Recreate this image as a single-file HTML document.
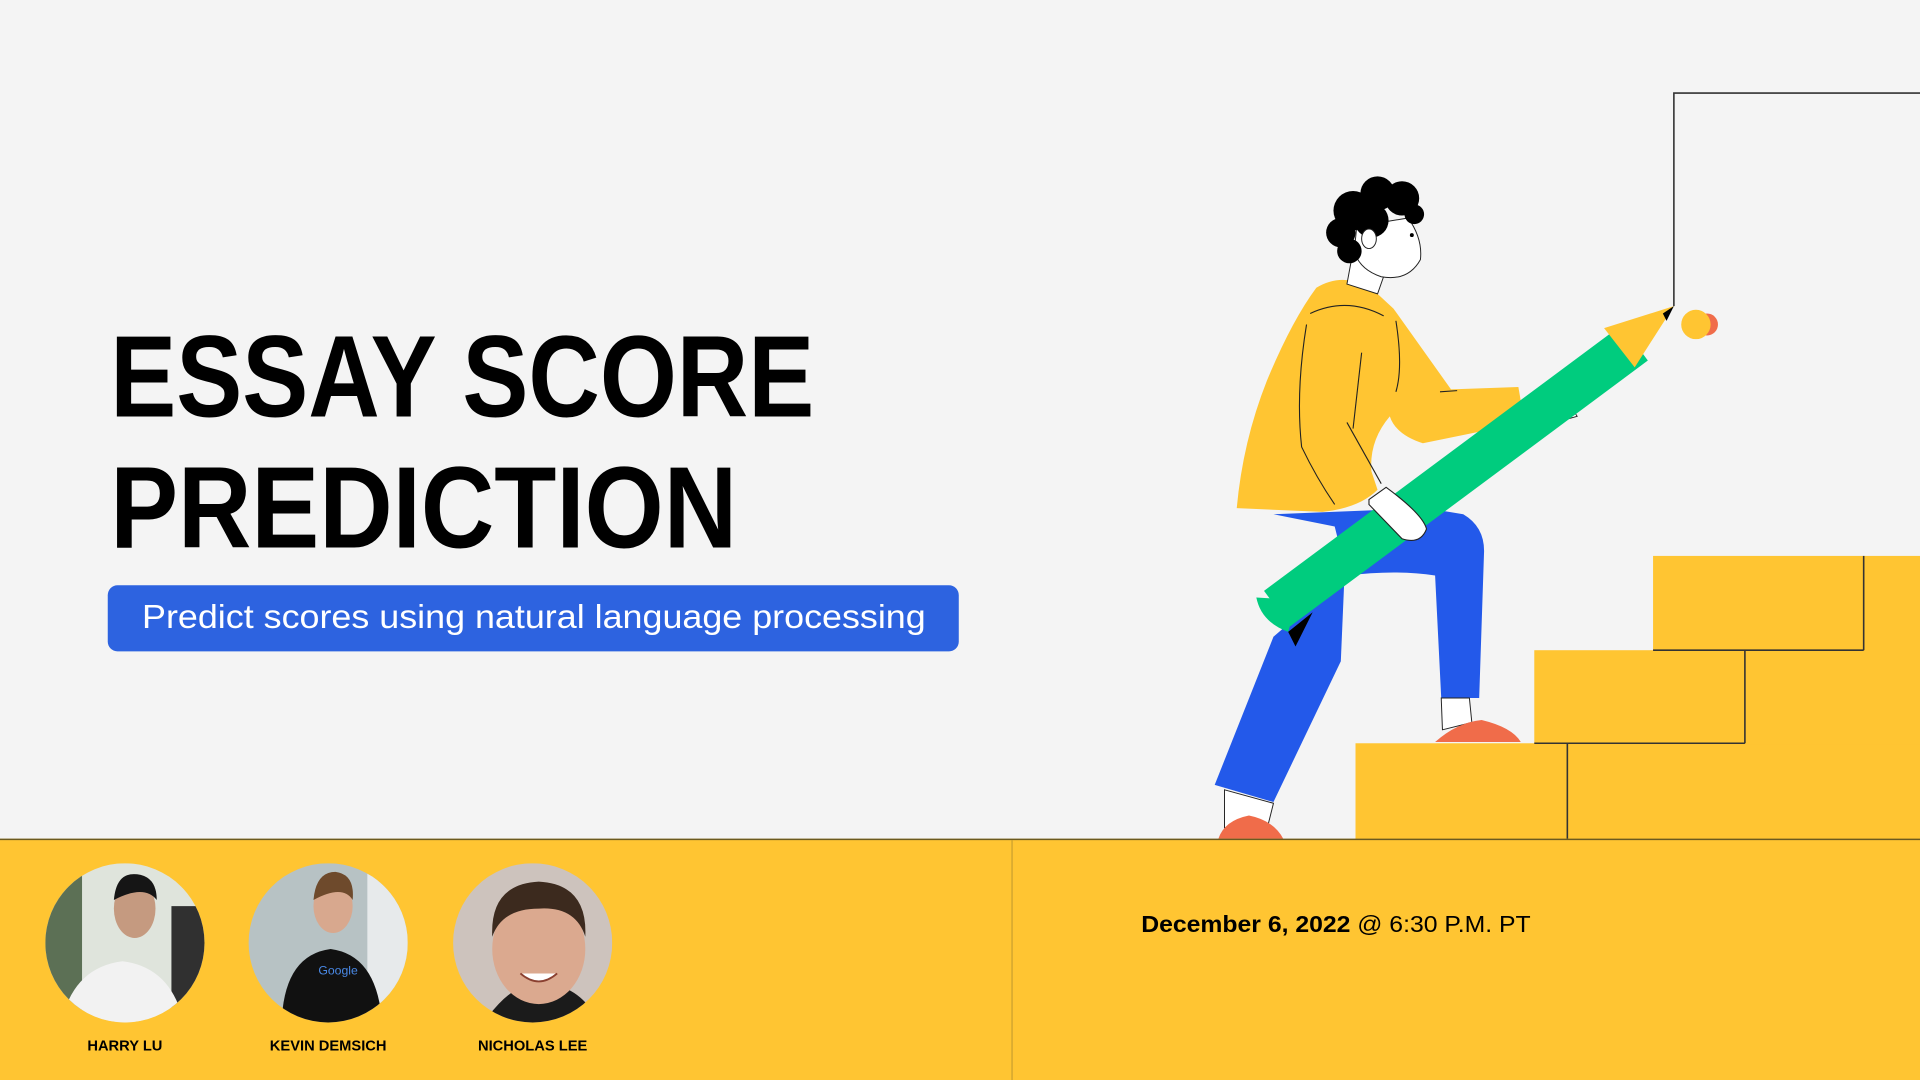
<!DOCTYPE html>
<html><head><meta charset="utf-8"><style>
html,body{margin:0;padding:0;width:1920px;height:1080px;overflow:hidden;background:#f4f4f4}
svg{display:block}
</style></head><body>
<svg width="1920" height="1080" viewBox="0 0 1568 882" xmlns="http://www.w3.org/2000/svg">
<defs>
<clipPath id="c1"><circle cx="102" cy="770" r="65"/></clipPath>
<clipPath id="c2"><circle cx="268" cy="770" r="65"/></clipPath>
<clipPath id="c3"><circle cx="435" cy="770" r="65"/></clipPath>
</defs>
<rect width="1568" height="882" fill="#f4f4f4"/>
<!-- title -->
<g font-family="Liberation Sans, sans-serif" font-weight="bold" fill="#000">
<text x="90" y="340" font-size="95" textLength="575" lengthAdjust="spacingAndGlyphs">ESSAY SCORE</text>
<text x="90" y="447" font-size="95" textLength="512" lengthAdjust="spacingAndGlyphs">PREDICTION</text>
</g>
<rect x="88" y="478" width="695" height="54" rx="8" fill="#2d63e0"/>
<text x="116" y="513" font-family="Liberation Sans, sans-serif" font-size="27" fill="#fff" textLength="640" lengthAdjust="spacingAndGlyphs">Predict scores using natural language processing</text>

<!-- frame line -->
<polyline points="1367,250 1367,76 1568,76" fill="none" stroke="#333" stroke-width="1.3"/>

<!-- stairs -->
<g fill="#ffc532">
<rect x="1107" y="607" width="461" height="79"/>
<rect x="1253" y="531" width="315" height="77"/>
<rect x="1350" y="454" width="218" height="78"/>
</g>
<g stroke="#333" stroke-width="1.3" fill="none">
<line x1="1280" y1="607" x2="1280" y2="685"/>
<line x1="1253" y1="607" x2="1425" y2="607"/>
<line x1="1425" y1="531" x2="1425" y2="607"/>
<line x1="1350" y1="531" x2="1522" y2="531"/>
<line x1="1522" y1="454" x2="1522" y2="531"/>
</g>

<!-- person -->
<!-- back leg -->
<path d="M1040,520 L1098,470 L1095,540 L1040,655 L992,641 Z" fill="#2359ea"/>
<path d="M1000,645 L1040,656 L1035,676 L1000,676 Z" fill="#fff" stroke="#222" stroke-width="0.8"/>
<path d="M995,685 Q1000,670 1020,666 Q1040,670 1048,685 Z" fill="#f06c4a"/>
<!-- front leg -->
<path d="M1040,420 L1165,415 L1195,420 Q1212,430 1212,450 L1208,570 L1177,570 L1172,470 Q1140,465 1100,470 L1090,430 Z" fill="#2359ea"/>
<path d="M1177,570 L1200,570 L1202,590 L1178,596 Z" fill="#fff" stroke="#222" stroke-width="0.8"/>
<path d="M1172,606 Q1190,590 1210,588 Q1235,594 1242,606 Z" fill="#f06c4a"/>
<!-- hoodie -->
<path d="M1075,235 Q1100,220 1125,240 L1138,252 L1185,318 L1240,316 L1245,345 L1162,362 Q1140,355 1135,340 Q1118,360 1120,385 L1125,400 Q1110,415 1080,418 L1010,415 Q1015,360 1035,310 Q1055,262 1075,235 Z" fill="#ffc532"/>
<g stroke="#222" stroke-width="0.9" fill="none">
<path d="M1070,256 Q1100,242 1130,258"/>
<path d="M1067,265 Q1058,320 1063,365 Q1075,390 1090,412"/>
<path d="M1112,288 L1105,350"/>
<path d="M1100,345 L1128,395"/>
<path d="M1140,262 Q1146,300 1140,320"/>
<path d="M1176,320 L1190,319"/>
</g>
<!-- neck/head -->
<path d="M1105,205 L1100,232 L1125,240 L1132,220 Z" fill="#fff" stroke="#222" stroke-width="0.8"/>
<path d="M1108,185 L1150,178 Q1162,195 1160,212 Q1150,230 1128,226 Q1110,220 1106,205 Z" fill="#fff" stroke="#222" stroke-width="0.8"/>
<g fill="#000">
<circle cx="1105" cy="172" r="16"/><circle cx="1125" cy="158" r="14"/><circle cx="1145" cy="162" r="14"/>
<circle cx="1095" cy="190" r="12"/><circle cx="1102" cy="205" r="10"/><circle cx="1120" cy="180" r="14"/>
<circle cx="1155" cy="175" r="8"/>
</g>
<ellipse cx="1118" cy="195" rx="6" ry="8" fill="#fff" stroke="#222" stroke-width="0.8"/>
<circle cx="1153" cy="192" r="1.6" fill="#000"/>
<!-- hand top -->
<path d="M1255,320 Q1280,325 1288,340 L1270,345 Z" fill="#fff" stroke="#222" stroke-width="0.8"/>
<!-- pencil -->
<line x1="1043" y1="497" x2="1335" y2="280" stroke="#00cc7e" stroke-width="36"/>
<path d="M1026,488 Q1030,508 1052,516 L1060,490 Z" fill="#00cc7e"/>
<path d="M1310,268 L1367,250 L1335,300 Z" fill="#ffc532"/>
<path d="M1358,256 L1367,250 L1361,262 Z" fill="#000"/>
<path d="M1052,516 L1072,500 L1058,528 Z" fill="#000"/>
<!-- lower hand -->
<path d="M1118,408 L1132,398 Q1162,420 1165,432 Q1160,445 1145,440 L1118,412 Z" fill="#fff" stroke="#222" stroke-width="0.9"/>
<!-- dot -->
<circle cx="1394" cy="265" r="9" fill="#f06c4a"/>
<circle cx="1385" cy="265" r="12" fill="#ffc532"/>

<!-- bottom band -->
<rect x="0" y="685" width="1568" height="197" fill="#ffc532"/>
<line x1="0" y1="685.5" x2="1568" y2="685.5" stroke="#6b5a20" stroke-width="1.2"/>
<line x1="826.5" y1="686" x2="826.5" y2="882" stroke="#c9a030" stroke-width="1"/>

<!-- photos -->
<g clip-path="url(#c1)">
<rect x="37" y="705" width="130" height="130" fill="#dfe4dc"/>
<rect x="37" y="705" width="30" height="130" fill="#5c7055"/>
<rect x="140" y="740" width="27" height="95" fill="#303030"/>
<path d="M50,835 Q60,790 100,785 Q140,790 150,835 Z" fill="#f2f2f2"/>
<ellipse cx="110" cy="742" rx="17" ry="24" fill="#c59a80"/>
<path d="M93,735 Q95,712 112,714 Q128,716 128,735 Q118,722 93,735 Z" fill="#151515"/>
</g>
<g clip-path="url(#c2)">
<rect x="203" y="705" width="130" height="130" fill="#b7c2c4"/>
<rect x="300" y="705" width="33" height="130" fill="#e7eaeb"/>
<path d="M230,835 Q232,780 270,775 Q308,780 312,835 Z" fill="#111"/>
<ellipse cx="272" cy="740" rx="16" ry="22" fill="#d8a88e"/>
<path d="M256,735 Q258,712 274,712 Q290,714 288,735 Q280,722 256,735 Z" fill="#6e4a2c"/>
<text x="260" y="796" font-family="Liberation Sans,sans-serif" font-size="10" fill="#4a8ae8">Google</text>
</g>
<g clip-path="url(#c3)">
<rect x="370" y="705" width="130" height="130" fill="#cdc3bd"/>
<path d="M395,835 Q420,800 440,805 Q470,800 490,835 Z" fill="#1b1b1b"/>
<ellipse cx="440" cy="775" rx="38" ry="45" fill="#dba98f"/>
<path d="M402,765 Q400,722 440,720 Q480,722 478,765 Q470,740 440,742 Q410,742 402,765 Z" fill="#3c2a1e"/>
<path d="M425,795 Q440,808 455,795" fill="#fff" stroke="#8a4030" stroke-width="1.5"/>
</g>

<g font-family="Liberation Sans, sans-serif" font-weight="bold" font-size="12" fill="#000" text-anchor="middle">
<text x="102" y="858">HARRY LU</text>
<text x="268" y="858">KEVIN DEMSICH</text>
<text x="435" y="858">NICHOLAS LEE</text>
</g>
<text x="932" y="761" font-family="Liberation Sans, sans-serif" font-size="19" fill="#000" textLength="318" lengthAdjust="spacingAndGlyphs"><tspan font-weight="bold">December 6, 2022</tspan> @ 6:30 P.M. PT</text>
</svg>
</body></html>
